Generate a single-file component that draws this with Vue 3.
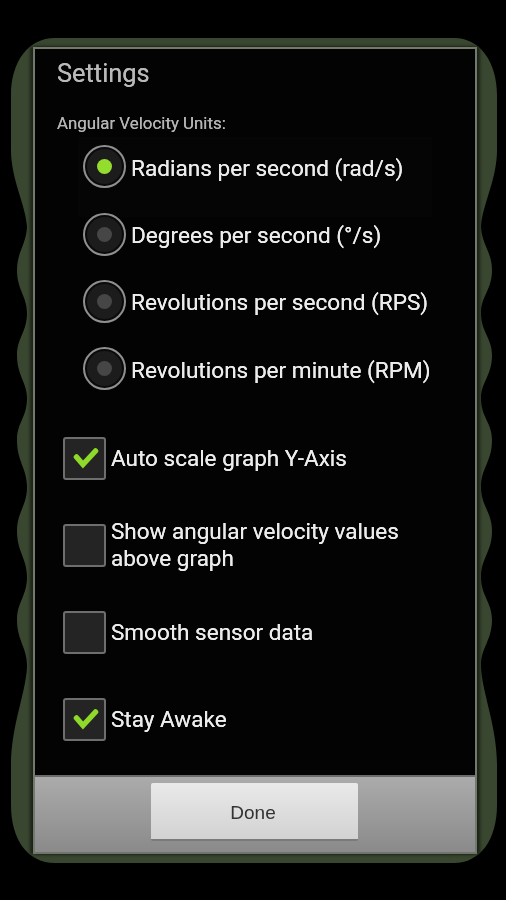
<script setup>
const units = [
  { label: 'Radians per second (rad/s)', on: true },
  { label: 'Degrees per second (°/s)', on: false },
  { label: 'Revolutions per second (RPS)', on: false },
  { label: 'Revolutions per minute (RPM)', on: false },
]
const options = [
  { label: 'Auto scale graph Y-Axis', on: true },
  { label: 'Show angular velocity values above graph', on: false },
  { label: 'Smooth sensor data', on: false },
  { label: 'Stay Awake', on: true },
]
</script>

<template>
  <div class="screen">
    <svg class="backdrop" width="506" height="900" viewBox="0 0 506 900" aria-hidden="true">
      <path fill="#3a4730" d="M55 38 H454 C480 38 497 62 497 95 V150 C497 180 482 205 481 227 C482 245 492 252 492 270 C492 290 481 296 481 313 C481 332 492 338 492 355 C492 376 481 382 481 398 C481 418 492 422 492 440 C492 462 481 468 481 487 C481 506 492 512 492 531 C492 552 481 558 481 577 C481 596 492 602 492 620 C492 640 481 648 481 665 C481 690 497 725 497 765 V805 C497 840 480 863 454 863 H55 C28 863 11 840 11 805 V765 C11 725 27 690 27 665 C27 648 17 640 17 620 C17 602 27 596 27 577 C27 558 17 552 17 531 C17 512 27 506 27 487 C27 468 17 462 17 440 C17 422 27 418 27 398 C27 382 17 376 17 355 C17 338 27 332 27 313 C27 296 17 290 17 270 C17 252 26 245 27 227 C26 205 11 180 11 150 V95 C11 62 28 38 55 38 Z"/>
    </svg>
    <div class="dialog">
      <div class="ghost" aria-hidden="true"></div>
      <div class="body">
        <h1 class="title">Settings</h1>
        <p class="group">Angular Velocity Units:</p>
        <div class="radios">
          <div v-for="u in units" :key="u.label" class="radio-row">
            <span class="radio"><span class="dot" :class="{ lit: u.on }"></span></span>
            <span class="radio-label">{{ u.label }}</span>
          </div>
        </div>
        <div class="checks">
          <div v-for="o in options" :key="o.label" class="check-row">
            <span class="box">
              <svg v-if="o.on" class="tick" width="28" height="24" viewBox="0 0 28 24" aria-hidden="true">
                <path d="M5.5 11 L12 18.5 L24.5 5" fill="none" stroke="#8ed92a" stroke-width="5.5" stroke-linecap="round" stroke-linejoin="miter"/>
              </svg>
            </span>
            <span class="check-label">{{ o.label }}</span>
          </div>
        </div>
      </div>
      <div class="footer">
        <button class="done" type="button">Done</button>
      </div>
    </div>
  </div>
</template>

<style>
html, body { background: #000; margin: 0; }
</style>

<style scoped>
.screen {
  position: relative;
  width: 506px;
  height: 900px;
  background: #000;
  overflow: hidden;
  font-family: Roboto, "Liberation Sans", sans-serif;
  padding: 47px 0 0 33px;
  box-sizing: border-box;
  filter: blur(0.4px);
}
.backdrop { position: absolute; left: 0; top: 0; }
.dialog {
  position: relative;
  width: 444px;
  height: 807px;
  box-sizing: border-box;
  border: 2px solid #737a6d;
  border-bottom-color: #6f746c;
  box-shadow: -3px 0 3px rgba(12, 16, 10, 0.65), 3px 0 3px rgba(12, 16, 10, 0.65);
  display: flex;
  flex-direction: column;
  background: #030303;
}
.ghost {
  position: absolute;
  left: 43px;
  top: 88px;
  width: 354px;
  height: 80px;
  background: #050505;
}
.body {
  position: relative;
  flex: 1;
  padding: 0 0 0 22px;
  min-height: 0;
}
.title {
  margin: 0;
  padding-top: 10px;
  font-size: 25.4px;
  font-weight: 400;
  line-height: 28px;
  color: #b9b9b9;
  text-shadow: 0 0 0.6px #b9b9b9;
}
.group {
  margin: 0;
  padding-top: 27px;
  font-size: 16.9px;
  line-height: 19px;
  color: #b4b4b4;
  text-shadow: 0 0 0.6px #b4b4b4;
}
.radios {
  display: flex;
  flex-direction: column;
  padding-left: 26px;
}
.radio-row {
  display: flex;
  align-items: center;
  height: 67.4px;
  gap: 5px;
}
.radio {
  width: 43px;
  height: 43px;
  box-sizing: border-box;
  border: 2px solid #8f8f8f;
  border-radius: 50%;
  background: #1c1c1c;
  box-shadow: inset 0 0 0 2px #0a0a0a;
  display: flex;
  align-items: center;
  justify-content: center;
  flex: none;
}
.dot {
  width: 15px;
  height: 15px;
  border-radius: 50%;
  background: #464646;
}
.dot.lit { background: #94dd2e; }
.radio-label {
  font-size: 22.6px;
  line-height: 28px;
  color: #ececec;
  text-shadow: 0 0 0.6px #ececec;
  white-space: nowrap;
  margin-top: 4px;
}
.checks {
  display: flex;
  flex-direction: column;
  margin-top: 12px;
  padding-left: 6px;
}
.check-row {
  display: flex;
  align-items: center;
  height: 87.2px;
  gap: 5px;
  width: 345px;
}
.box {
  width: 43px;
  height: 43px;
  box-sizing: border-box;
  border: 2px solid #6e6e6e;
  border-radius: 3px;
  background: #242424;
  display: flex;
  align-items: center;
  justify-content: center;
  flex: none;
}
.tick { margin-top: -1px; }
.check-label {
  font-size: 22.5px;
  line-height: 27px;
  color: #ececec;
  text-shadow: 0 0 0.6px #ececec;
}
.footer {
  position: relative;
  height: 77px;
  flex: none;
  box-sizing: border-box;
  border-top: 2px solid #6b6b6b;
  background: linear-gradient(#ababab, #8a8a8a);
  padding-top: 6px;
  display: flex;
  justify-content: center;
  align-items: flex-start;
}
.done {
  width: 207px;
  height: 58px;
  border: 0;
  border-bottom: 2px solid #7a7a7a;
  border-radius: 2px;
  background: linear-gradient(#e9e9e9, #d2d2d2);
  font-family: "Liberation Sans", Arial, sans-serif;
  font-size: 19px;
  color: #333;
  margin-right: 1px;
  padding: 3px 3px 0 0;
}
</style>
